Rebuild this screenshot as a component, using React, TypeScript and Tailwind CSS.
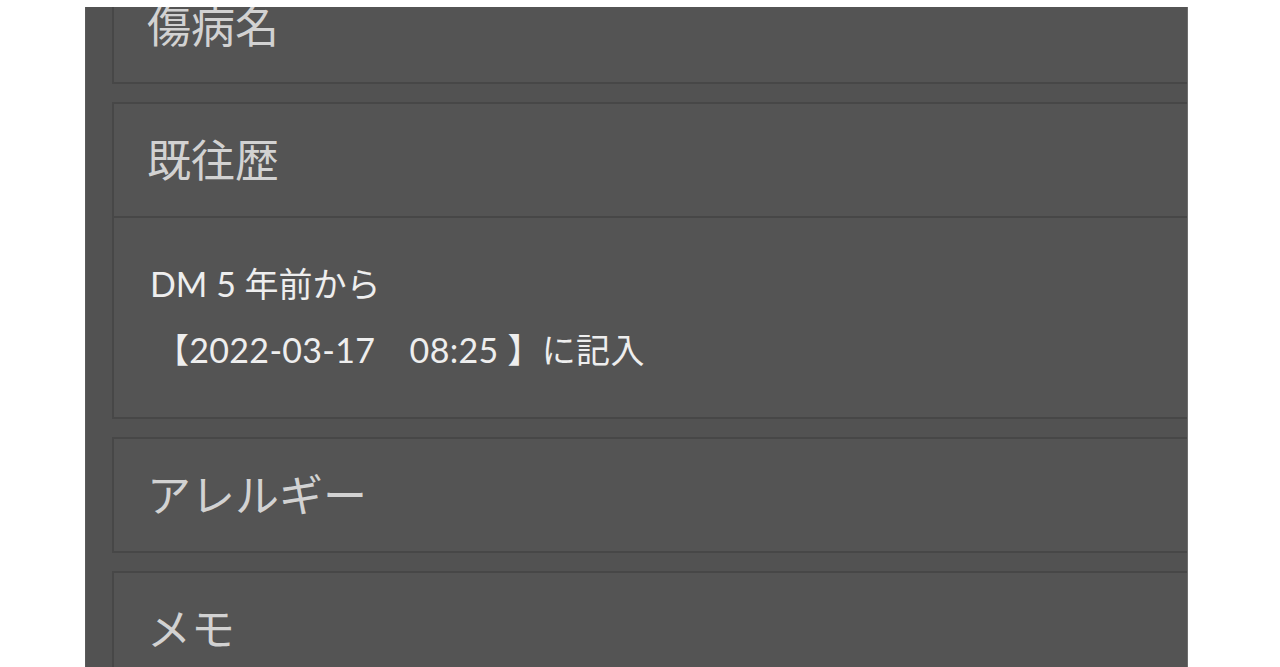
import React from "react";

const font = { fontFamily: "Lato, 'Noto Sans CJK JP', sans-serif" };

function Header({ children }: { children: React.ReactNode }) {
  return (
    <div className="h-[112px] flex items-center pl-[33px] text-[44px] text-[#d2d2d2] leading-none">
      {children}
    </div>
  );
}

export default function App() {
  return (
    <div className="w-full h-[667px] bg-white pt-[7px] pl-[85px] overflow-hidden" style={font}>
      <div className="w-[1103px] h-[660px] bg-[#525252] overflow-hidden border-r border-[#6e6e6e] border-l border-l-[#5a5a5a]">
        <div className="-mt-[39px] pl-[26px] flex flex-col gap-[18px] w-[1200px]">
          <div className="border-2 border-[#474747] bg-[#545454]">
            <Header>傷病名</Header>
          </div>
          <div className="border-2 border-[#474747] bg-[#545454]">
            <Header>既往歴</Header>
            <div className="border-t-2 border-[#474747] pl-[36px] pt-[33px] pb-[34px] text-[34px] leading-[66px] text-[#eeeeee]">
              <div>DM 5 年前から</div>
              <div className="pl-[5px] tracking-[0.3px]">【2022-03-17　08:25 】に記入</div>
            </div>
          </div>
          <div className="border-2 border-[#474747] bg-[#545454]">
            <Header>アレルギー</Header>
          </div>
          <div className="border-2 border-[#474747] bg-[#545454]">
            <Header>メモ</Header>
          </div>
        </div>
      </div>
    </div>
  );
}
